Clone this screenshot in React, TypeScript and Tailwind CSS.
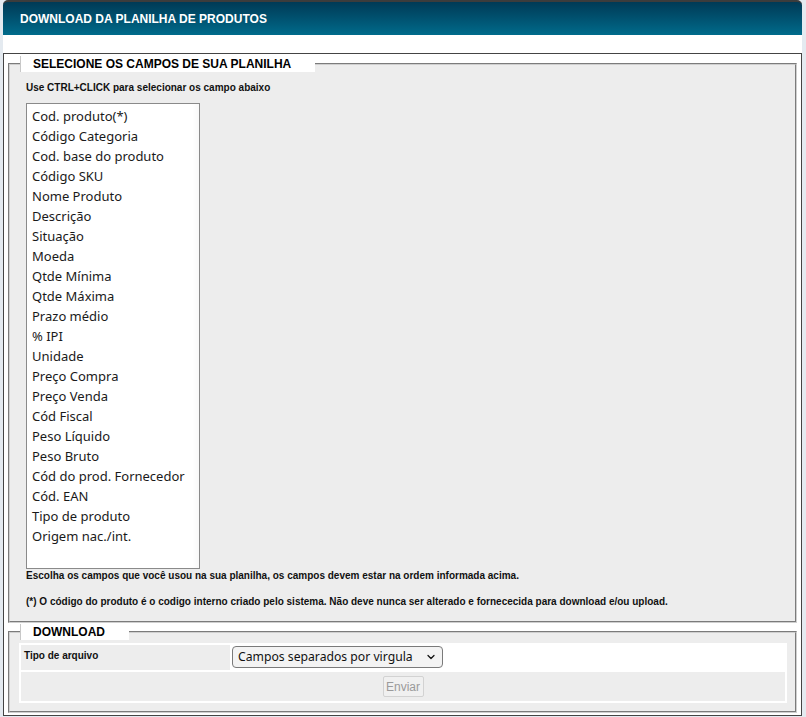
import { ChevronDown } from 'lucide-react'

const campos = [
  'Cod. produto(*)',
  'Código Categoria',
  'Cod. base do produto',
  'Código SKU',
  'Nome Produto',
  'Descrição',
  'Situação',
  'Moeda',
  'Qtde Mínima',
  'Qtde Máxima',
  'Prazo médio',
  '% IPI',
  'Unidade',
  'Preço Compra',
  'Preço Venda',
  'Cód Fiscal',
  'Peso Líquido',
  'Peso Bruto',
  'Cód do prod. Fornecedor',
  'Cód. EAN',
  'Tipo de produto',
  'Origem nac./int.',
]

function Legend({ children, className }: { children: React.ReactNode; className?: string }) {
  return (
    <legend
      className={`h-[16px] border-l border-[#c8c8c8] bg-white pl-[12px] pr-[24px] text-[12px] font-bold leading-[16px] text-black ${className ?? ''}`}
    >
      {children}
    </legend>
  )
}

export default function App() {
  return (
    <div className="min-h-[717px] bg-[#e4eaf0] pl-[3px] font-['Liberation_Sans',Arial,sans-serif]">
      <div className="w-[799px]">
        {/* cabeçalho */}
        <div className="flex h-[35px] items-center rounded-t-[5px] border-t-2 border-[#3c3c3c] bg-gradient-to-b from-[#003a56] to-[#006b8b] pl-[17px] text-[12px] font-bold text-white">
          DOWNLOAD DA PLANILHA DE PRODUTOS
        </div>
        <div className="h-[18px] bg-white" />

        <div className="border border-[#444] bg-white px-[4px] pt-[2px] pb-[2px]">
          {/* campos */}
          <fieldset className="border-2 border-[#cfcfcf] bg-[#ededed] px-[16px] pb-[13px] [border-style:groove]">
            <Legend className="-ml-[6px]">SELECIONE OS CAMPOS DE SUA PLANILHA</Legend>
            <p className="mt-[10px] text-[10px] font-bold leading-[12px] text-[#111]">
              Use CTRL+CLICK para selecionar os campo abaixo
            </p>
            <div className="mt-[9px] h-[466px] w-[174px] border border-[#8a8a8a] bg-white pt-[2px] pl-[5px] font-['Noto_Sans',sans-serif] text-[13px] leading-[20px] text-[#1a1a1a] shadow-[inset_-8px_0_8px_-8px_rgba(0,0,0,0.06)]">
              {campos.map((c) => (
                <div key={c} className="whitespace-nowrap">
                  {c}
                </div>
              ))}
            </div>
            <p className="mt-[1px] text-[10px] font-bold leading-[12px] text-[#111]">
              Escolha os campos que você usou na sua planilha, os campos devem estar na ordem informada acima.
            </p>
            <p className="mt-[14px] text-[10px] font-bold leading-[12px] text-[#111]">
              (*) O código do produto é o codigo interno criado pelo sistema. Não deve nunca ser alterado e fornececida para download e/ou upload.
            </p>
          </fieldset>

          {/* download */}
          <fieldset className="mt-[1px] border-2 border-[#cfcfcf] bg-[#ededed] pl-[9px] pr-[8px] pb-[8px] [border-style:groove]">
            <Legend className="ml-[1px]">DOWNLOAD</Legend>
            <div className="mt-[3px] w-[768px] bg-white p-[2px]">
              <div className="flex h-[25px]">
                <div className="w-[209px] bg-[#ededed] px-[3px] pt-[5px] text-[10px] font-bold leading-[12px] text-[#111]">
                  Tipo de arquivo
                </div>
                <div className="flex-1 bg-white pl-[2px] pt-[1px]">
                  <div className="flex h-[22px] w-[211px] items-center justify-between whitespace-nowrap rounded-[4px] border border-[#7a7a7a] bg-[#f3f3f3] pl-[5px] pr-[5px] font-['Noto_Sans',sans-serif] text-[12.2px] leading-[18px] text-[#111]">
                    <span>Campos separados por virgula</span>
                    <ChevronDown size={12} strokeWidth={2.5} className="shrink-0" />
                  </div>
                </div>
              </div>
              <div className="mt-[2px] flex h-[29px] items-center justify-center bg-[#ededed]">
                <button
                  disabled
                  className="h-[21px] w-[41px] rounded-[2px] border border-[#d2d2d2] bg-[#f0f0f0] text-[12px] text-[#9a9a9a]"
                >
                  Enviar
                </button>
              </div>
            </div>
          </fieldset>
        </div>
      </div>
    </div>
  )
}
